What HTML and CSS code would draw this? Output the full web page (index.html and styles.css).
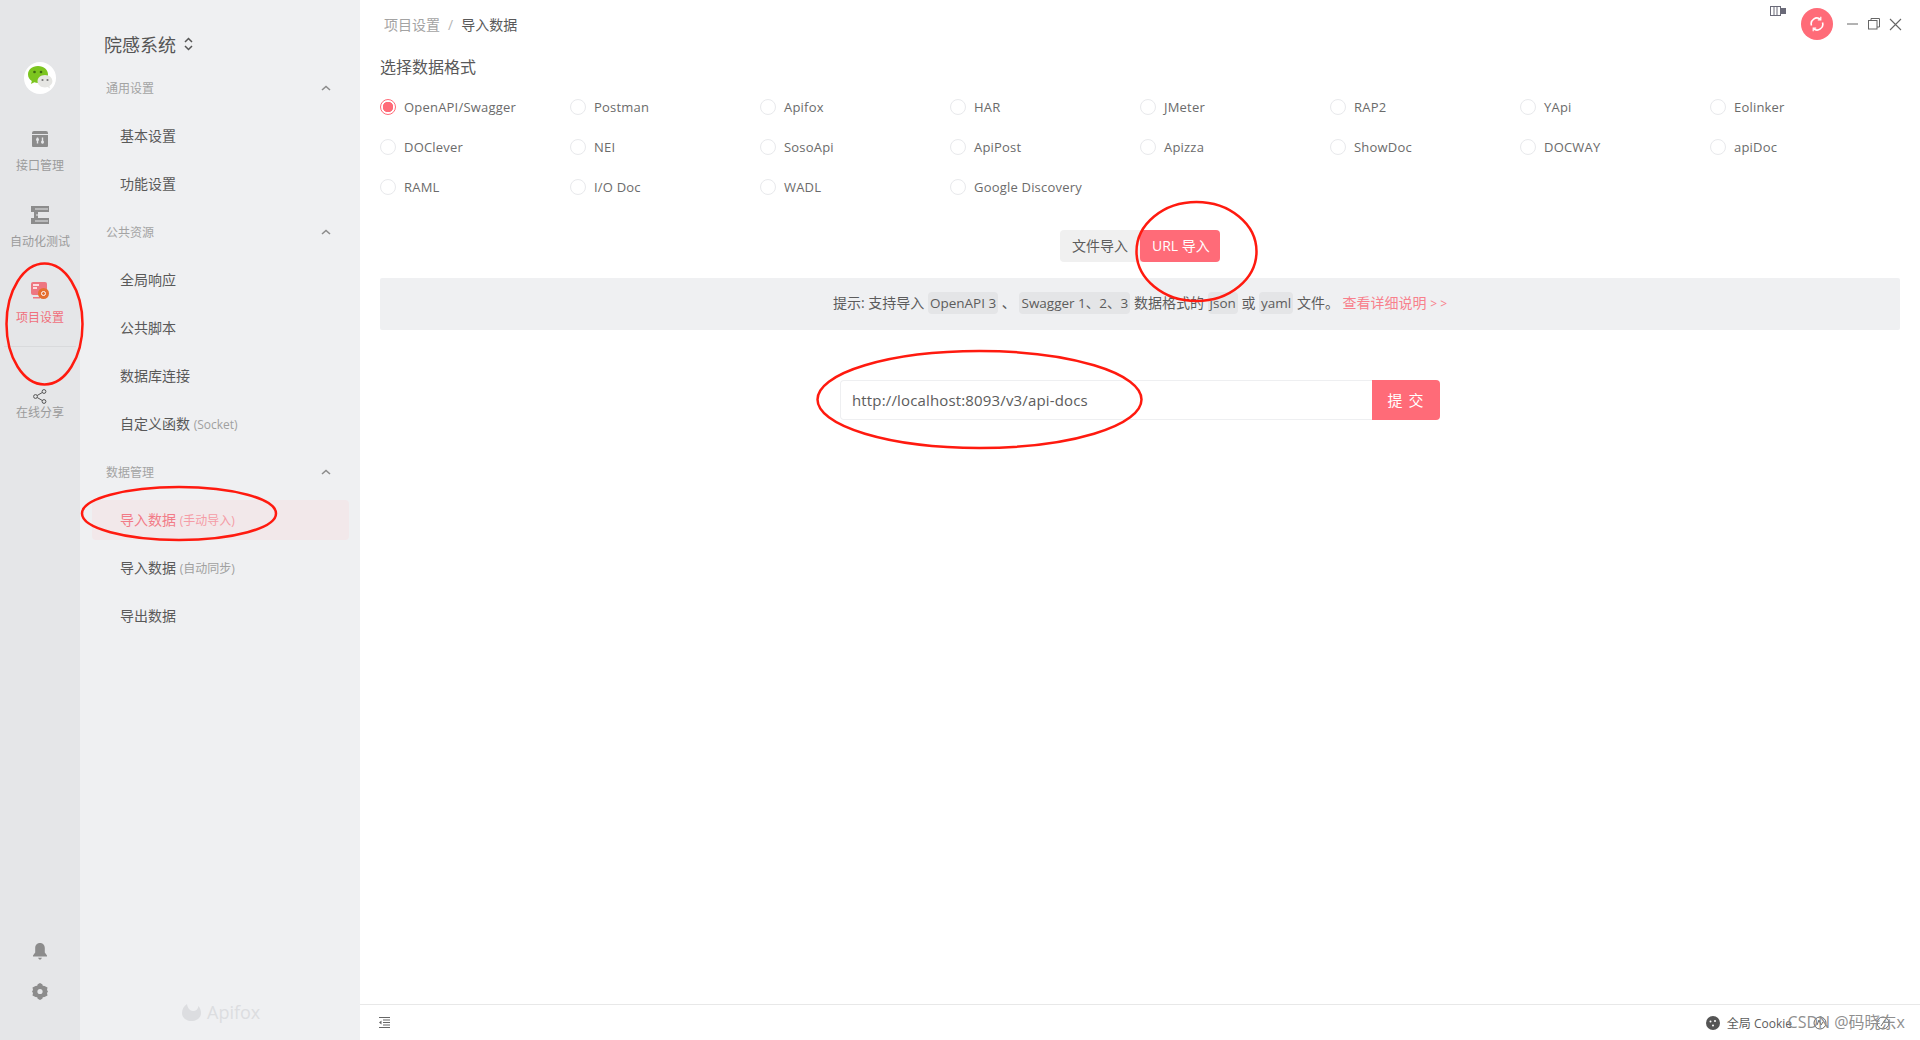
FILE: index.html
```html
<!DOCTYPE html>
<html lang="zh">
<head>
    <meta charset="UTF-8">
    <title>导入数据</title>
    <link rel="stylesheet" href="styles.css">
</head>
<body>
    <div class="app">
        <nav class="rail">
            <div class="avatar">
                <svg width="28" height="26" viewBox="0 0 28 26">
                    <path d="M12 1C5.900 1 2 5 2 9.500c0 2.800 1.500 5 3.800 6.500L5 19l3.300-1.700c1.200.4 2.400.6 3.700.6 6 0 10-3.800 10-8.400C22 5 18 1 12 1z" fill="#7cc51f"/>
                    <circle cx="8.500" cy="7" r="1.300" fill="#3d6a10"/>
                    <circle cx="15" cy="7" r="1.300" fill="#3d6a10"/>
                    <path d="M19 10c-4.400 0-7.500 2.800-7.500 6.200s3.100 6.200 7.500 6.200c.9 0 1.800-.1 2.600-.4l2.400 1.500-.6-2.500c1.800-1.100 3-2.800 3-4.800 0-3.400-3.100-6.200-7.400-6.200z" fill="#e6e6e3"/>
                    <circle cx="16.500" cy="15" r="1.100" fill="#777"/>
                    <circle cx="21.500" cy="15" r="1.100" fill="#777"/>
                </svg>
            </div>
            <a class="rail-item rail-first">
                <svg width="18" height="18" viewBox="0 0 18 18">
                    <path d="M1 3a2 2 0 0 1 2-2h12a2 2 0 0 1 2 2v1H1zM1 5h16v11a1 1 0 0 1-1 1H2a1 1 0 0 1-1-1z" fill="#8c8c8c"/>
                    <path d="M6.500 7.500v6M11.500 7.500v6" stroke="#e5e6e8" stroke-width="1.400"/>
                    <circle cx="6.500" cy="9.500" r="1.500" fill="#e5e6e8"/>
                    <circle cx="11.500" cy="12" r="1.500" fill="#e5e6e8"/>
                </svg>
                <span>接口管理</span>
            </a>
            <a class="rail-item">
                <svg width="18" height="18" viewBox="0 0 18 18">
                    <path d="M0 0h18v6H0zM3 6h4v6H3zM0 12h18v6H0z" fill="#8c8c8c"/>
                    <path d="M4 3h13M4 15h13M5 9h9" stroke="#e5e6e8" stroke-width="1"/>
                </svg>
                <span>自动化测试</span>
            </a>
            <a class="rail-item rail-active">
                <svg width="18" height="18" viewBox="0 0 18 18">
                    <rect x="0" y="0" width="16" height="13" rx="2" fill="#ee7680"/>
                    <path d="M2 3h6M2 6h4" stroke="#fff" stroke-width="1.300"/>
                    <path d="M2 15h7v1.500H2z" fill="#ee7680"/>
                    <circle cx="12.500" cy="11.500" r="5.500" fill="#e5702f"/>
                    <circle cx="12.500" cy="11.500" r="2" fill="none" stroke="#fff" stroke-width="1"/>
                </svg>
                <span>项目设置</span>
            </a>
            <div class="rail-line"></div>
            <a class="rail-item rail-share">
                <svg width="14" height="15" viewBox="0 0 14 15" fill="none" stroke="#555" stroke-width="1">
                    <circle cx="11" cy="2.500" r="1.900"/>
                    <circle cx="2.500" cy="7.500" r="1.900"/>
                    <circle cx="11" cy="12.500" r="1.900"/>
                    <path d="M9.300 3.500L4.200 6.500M4.200 8.500l5.100 3"/>
                </svg>
                <span>在线分享</span>
            </a>
            <div class="rail-bottom">
                <svg width="14" height="17" viewBox="0 0 14 17" fill="#8c8c8c">
                    <path d="M7 0c3 0 4.800 2.200 4.800 5v4.500L14 12.500v1H0v-1l2.200-3V5C2.200 2.200 4 0 7 0zM5 14.700h4L7.800 16.500H6.200z"/>
                </svg>
                <svg width="16" height="17" viewBox="0 0 16 17">
                    <path d="M8 0l2.300 1.200.5 1.500 1.700.2L15.500 4.500 15 7l1 1.500L15 10l.5 2.500-3 1.600-1.700.2-.5 1.500L8 17l-2.300-1.200-.5-1.500-1.700-.2-3-1.600L1 10 0 8.500 1 7 .5 4.500l3-1.600 1.700-.2.5-1.500z" fill="#8c8c8c"/>
                    <circle cx="8" cy="8.500" r="2.600" fill="#e5e6e8"/>
                </svg>
            </div>
        </nav>

        <aside class="side">
            <div class="side-title">
                <span>院感系统</span>
                <svg width="9" height="14" viewBox="0 0 9 14" fill="none" stroke="#555" stroke-width="1.500">
                    <path d="M1 5l3.500-3.500L8 5M1 9l3.500 3.500L8 9"/>
                </svg>
            </div>

            <div class="side-group">
                <span>通用设置</span>
                <svg class="chev" width="10" height="6" viewBox="0 0 10 6"><path d="M1 5l4-3.500L9 5" fill="none" stroke="#8c8c8c" stroke-width="1.600"/></svg>
            </div>
            <a class="side-item">基本设置</a>
            <a class="side-item">功能设置</a>

            <div class="side-group">
                <span>公共资源</span>
                <svg class="chev" width="10" height="6" viewBox="0 0 10 6"><path d="M1 5l4-3.500L9 5" fill="none" stroke="#8c8c8c" stroke-width="1.600"/></svg>
            </div>
            <a class="side-item">全局响应</a>
            <a class="side-item">公共脚本</a>
            <a class="side-item">数据库连接</a>
            <a class="side-item">自定义函数 <small>(Socket)</small></a>

            <div class="side-group">
                <span>数据管理</span>
                <svg class="chev" width="10" height="6" viewBox="0 0 10 6"><path d="M1 5l4-3.500L9 5" fill="none" stroke="#8c8c8c" stroke-width="1.600"/></svg>
            </div>
            <a class="side-item side-active">导入数据 <small>(手动导入)</small></a>
            <a class="side-item">导入数据 <small>(自动同步)</small></a>
            <a class="side-item">导出数据</a>

            <div class="side-logo">
                <svg width="20" height="18" viewBox="0 0 20 18">
                    <path d="M5 1C2 3 0 6 0 10c0 4.500 4 8 9.500 8S19 14.500 19 10c0-3-1-5-2.500-7-.3 3-2.500 5-5.500 5C8 8 5.500 5 5 1z" fill="#dcdde0"/>
                </svg>
                <span>Apifox</span>
            </div>
        </aside>

        <main class="main">
            <header class="crumbs">
                <span class="crumb-link">项目设置</span>
                <span class="crumb-sep">/</span>
                <span class="crumb-now">导入数据</span>
            </header>

            <div class="top-tools">
                <svg width="16" height="10" viewBox="0 0 16 10" fill="none" stroke="#6a6a78" stroke-width="1">
                    <rect x="0.500" y="0.500" width="10" height="9"/>
                    <path d="M4 .5v9M7 .5v9"/>
                    <rect x="10.500" y="2.500" width="5" height="5" fill="#6a6a78"/>
                </svg>
                <div class="sync">
                    <svg width="16" height="16" viewBox="0 0 16 16" fill="none" stroke="#fff" stroke-width="1.600">
                        <path d="M2.500 9.500A5.700 5.700 0 0 1 11.500 3.300M13.500 6.500A5.700 5.700 0 0 1 4.500 12.700"/>
                        <path d="M11.800 0.800v3h-3M4.200 15.200v-3h3" stroke-width="1.200"/>
                    </svg>
                </div>
                <svg class="win-min" width="12" height="12" viewBox="0 0 12 12"><path d="M0 6h11" stroke="#666" stroke-width="1"/></svg>
                <svg class="win-max" width="12" height="12" viewBox="0 0 12 12" fill="none" stroke="#666"><rect x="0.500" y="2.500" width="8.500" height="8.500"/><path d="M3 2.500V.5h8.500V9H9"/></svg>
                <svg class="win-close" width="13" height="13" viewBox="0 0 13 13"><path d="M1 1l11 11M12 1L1 12" stroke="#666" stroke-width="1.100"/></svg>
            </div>

            <div class="content">
                <h3 class="format-title">选择数据格式</h3>
                <div class="format-grid">
                    <label class="radio radio-on"><i></i>OpenAPI/Swagger</label>
                    <label class="radio"><i></i>Postman</label>
                    <label class="radio"><i></i>Apifox</label>
                    <label class="radio"><i></i>HAR</label>
                    <label class="radio"><i></i>JMeter</label>
                    <label class="radio"><i></i>RAP2</label>
                    <label class="radio"><i></i>YApi</label>
                    <label class="radio"><i></i>Eolinker</label>
                    <label class="radio"><i></i>DOClever</label>
                    <label class="radio"><i></i>NEI</label>
                    <label class="radio"><i></i>SosoApi</label>
                    <label class="radio"><i></i>ApiPost</label>
                    <label class="radio"><i></i>Apizza</label>
                    <label class="radio"><i></i>ShowDoc</label>
                    <label class="radio"><i></i>DOCWAY</label>
                    <label class="radio"><i></i>apiDoc</label>
                    <label class="radio"><i></i>RAML</label>
                    <label class="radio"><i></i>I/O Doc</label>
                    <label class="radio"><i></i>WADL</label>
                    <label class="radio"><i></i>Google Discovery</label>
                </div>

                <div class="switcher">
                    <button class="switch-btn">文件导入</button>
                    <button class="switch-btn switch-on">URL 导入</button>
                </div>

                <div class="notice">
                    提示: 支持导入 <code>OpenAPI 3</code> 、 <code>Swagger 1、2、3</code> 数据格式的 <code>json</code> 或 <code>yaml</code> 文件。 <a>查看详细说明 <span class="notice-arrows">&gt; &gt;</span></a>
                </div>

                <div class="url-form">
                    <input class="url-input" type="text" value="http://localhost:8093/v3/api-docs">
                    <button class="url-submit">提 交</button>
                </div>
            </div>

            <footer class="foot">
                <svg width="11" height="11" viewBox="0 0 11 11">
                    <path d="M0 .5h11M4 3h7M4 5.500h7M4 8h7M0 10.500h11" stroke="#666" stroke-width="1"/>
                    <path d="M2.500 3.500v4L0 5.500z" fill="#666"/>
                </svg>
                <div class="foot-right">
                    <svg width="14" height="14" viewBox="0 0 14 14">
                        <circle cx="7" cy="7" r="7" fill="#555"/>
                        <circle cx="4.500" cy="5.500" r="1" fill="#fff"/>
                        <circle cx="9" cy="5" r="1" fill="#fff"/>
                        <circle cx="7" cy="9.500" r="1" fill="#fff"/>
                    </svg>
                    <span>全局 Cookie</span>
                    <svg class="foot-icon" width="14" height="14" viewBox="0 0 14 14" fill="none" stroke="#666"><circle cx="7" cy="7" r="6"/><path d="M4 9l2-5 2 5 2-3"/></svg>
                    <svg class="foot-icon foot-icon-last" width="14" height="14" viewBox="0 0 14 14" fill="none" stroke="#666"><circle cx="7" cy="7" r="6"/><path d="M5 10l4-6"/></svg>
                </div>
                <span class="watermark">CSDN @码晓东x</span>
            </footer>
        </main>

        <svg class="marks" width="1920" height="1040" viewBox="0 0 1920 1040" fill="none" stroke="#ff1a0f" stroke-width="2.500">
            <ellipse cx="44.500" cy="324" rx="38" ry="60.500"/>
            <ellipse cx="179" cy="513.500" rx="97" ry="26.500"/>
            <ellipse cx="1196.500" cy="251.500" rx="60" ry="49.500"/>
            <ellipse cx="979.500" cy="399.500" rx="162" ry="48.500"/>
        </svg>
    </div>
</body>
</html>
```

FILE: styles.css
```css
* {
    box-sizing: border-box;
}
body {
    margin: 0;
    background-color: white;
    font-family: "Open Sans", "Noto Sans CJK SC", sans-serif;
    font-size: 14px;
    color: #5c5c5c;
}
a {
    color: inherit;
}

.app {
    position: relative;
    display: flex;
    width: 1920px;
    height: 1040px;
    overflow: hidden;
}

/* left rail */
.rail {
    width: 80px;
    flex-shrink: 0;
    display: flex;
    flex-direction: column;
    align-items: center;
    background-color: #e5e6e8;
}
.avatar {
    width: 32px;
    height: 32px;
    margin-top: 62px;
    border-radius: 50%;
    background-color: white;
    display: flex;
    align-items: center;
    justify-content: center;
}
.rail-item {
    display: flex;
    flex-direction: column;
    align-items: center;
    height: 76px;
    font-size: 12px;
    line-height: 18px;
    color: #9b9b9b;
}
.rail-item svg {
    margin-bottom: 9px;
}
.rail-first {
    margin-top: 36px;
}
.rail-active {
    color: #f0707c;
}
.rail-line {
    width: 72px;
    height: 1px;
    margin-top: -12px;
    background-color: #d9dadc;
}
.rail-share {
    margin-top: 42px;
}
.rail-share svg {
    margin-bottom: 0;
}
.rail-bottom {
    margin-top: auto;
    margin-bottom: 40px;
    display: flex;
    flex-direction: column;
    align-items: center;
    gap: 23px;
}

/* second column */
.side {
    position: relative;
    width: 280px;
    flex-shrink: 0;
    display: flex;
    flex-direction: column;
    padding: 32px 11px 0 12px;
    background-color: #eff0f2;
}
.side-title {
    display: flex;
    align-items: center;
    gap: 8px;
    height: 24px;
    padding-left: 12px;
    font-size: 18px;
    color: #555;
}
.side-group {
    display: flex;
    align-items: center;
    justify-content: space-between;
    height: 48px;
    padding: 0 18px 0 14px;
    font-size: 12px;
    color: #a3a3a3;
}
.side-title + .side-group {
    margin-top: 8px;
}
.side-item {
    display: block;
    height: 40px;
    margin: 4px 0;
    padding-left: 28px;
    border-radius: 4px;
    line-height: 40px;
    color: #595959;
}
.side-item small {
    font-size: 12px;
    color: #a0a0a0;
}
.side-active {
    background-color: #f2e8ea;
    color: #f27b87;
}
.side-active small {
    color: #f59ca6;
}
.side-logo {
    position: absolute;
    left: 102px;
    bottom: 16px;
    display: flex;
    align-items: center;
    gap: 5px;
    font-size: 18px;
    line-height: 24px;
    color: #dcdde0;
}

/* main area */
.main {
    position: relative;
    flex: 1;
    display: flex;
    flex-direction: column;
    min-width: 0;
}
.crumbs {
    display: flex;
    align-items: center;
    gap: 8px;
    height: 48px;
    padding-left: 24px;
    color: #a3a3a3;
}
.crumb-sep {
    color: #b5b5b5;
}
.crumb-now {
    color: #595959;
}
.top-tools {
    position: absolute;
    top: 0;
    right: 0;
    width: 200px;
    height: 48px;
}
.top-tools svg {
    position: absolute;
}
.top-tools > svg:first-child {
    left: 50px;
    top: 6px;
}
.sync {
    position: absolute;
    left: 81px;
    top: 8px;
    width: 32px;
    height: 32px;
    border-radius: 50%;
    background-color: #ff6b78;
    display: flex;
    align-items: center;
    justify-content: center;
}
.sync svg {
    position: static;
}
.win-min {
    left: 127px;
    top: 18px;
}
.win-max {
    left: 148px;
    top: 18px;
}
.win-close {
    left: 169px;
    top: 18px;
}

.content {
    flex: 1;
    padding: 7px 20px 0;
}
.format-title {
    margin: 0;
    font-size: 16px;
    font-weight: normal;
    line-height: 24px;
    color: #595959;
}
.format-grid {
    display: grid;
    grid-template-columns: repeat(8, 190px);
    grid-auto-rows: 40px;
    margin-top: 8px;
}
.radio {
    display: flex;
    align-items: center;
    gap: 8px;
    font-size: 13px;
    letter-spacing: 0.2px;
    color: #6b6b6b;
}
.radio i {
    width: 16px;
    height: 16px;
    border: 1px solid #e8e9ec;
    border-radius: 50%;
}
.radio-on i {
    border-color: #ff6b78;
    background: radial-gradient(circle, #ff6b78 0 5px, white 5.5px);
}

.switcher {
    display: flex;
    justify-content: center;
    margin-top: 23px;
}
.switch-btn {
    width: 86px;
    height: 32px;
    padding: 0 0 2px 12px;
    border: none;
    border-radius: 4px;
    background-color: #f0f0f0;
    font-family: inherit;
    font-size: 14px;
    text-align: left;
    color: #5c5c5c;
}
.switch-on {
    position: relative;
    width: 80px;
    margin-left: -6px;
    background-color: #ff6b78;
    color: white;
}

.notice {
    height: 52px;
    margin-top: 16px;
    border-radius: 2px;
    background-color: #eff0f2;
    text-align: center;
    line-height: 50px;
    font-size: 14px;
    color: #5c5c5c;
}
.notice code {
    padding: 2px;
    border-radius: 4px;
    background-color: #e4e5e7;
    font-family: inherit;
    font-size: 13.500px;
}
.notice a {
    color: #f8808c;
}
.notice-arrows {
    font-size: 12px;
}

.url-form {
    display: flex;
    width: 600px;
    height: 40px;
    margin: 50px auto 0;
}
.url-input {
    flex: 1;
    min-width: 0;
    padding: 0 11px;
    border: 1px solid #eeeff1;
    border-right: none;
    border-radius: 4px 0 0 4px;
    outline: none;
    font-family: inherit;
    font-size: 15px;
    letter-spacing: 0.15px;
    color: #5c5c5c;
}
.url-submit {
    width: 68px;
    padding: 0 0 2px;
    border: none;
    border-radius: 0 4px 4px 0;
    background-color: #ff6b78;
    font-family: inherit;
    font-size: 15px;
    letter-spacing: 1px;
    color: white;
}

.foot {
    position: relative;
    display: flex;
    align-items: center;
    height: 36px;
    padding-left: 19px;
    border-top: 1px solid #e8e8e8;
}
.foot-right {
    margin-left: auto;
    display: flex;
    align-items: center;
    gap: 7px;
    padding-right: 30px;
    font-size: 12px;
}
.foot-icon {
    margin-left: 14px;
}
.foot-icon-last {
    margin-left: 42px;
}
.watermark {
    position: absolute;
    right: 15px;
    top: 7px;
    font-size: 16px;
    line-height: 20px;
    color: #8f8f8f;
}

/* red marker circles on top of the screenshot */
.marks {
    position: absolute;
    left: 0;
    top: 0;
    pointer-events: none;
}
```
